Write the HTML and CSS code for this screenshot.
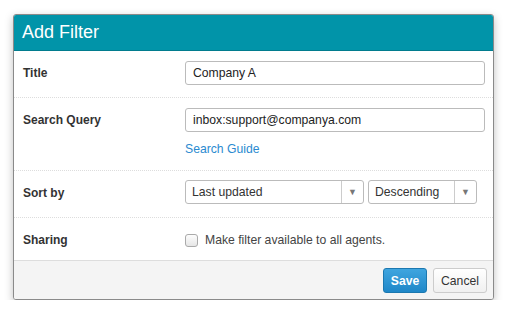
FILE: index.html
```html
<!DOCTYPE html>
<html>
<head lang="en">
    <meta charset="UTF-8">
    <title>Add Filter</title>
    <link rel="stylesheet" href="styles.css">
</head>
<body>
    <div class="modal">
        <div class="modal_head">Add Filter</div>
        <div class="row">
            <div class="label">Title</div>
            <div class="field">
                <input class="txt" type="text" value="Company A" />
            </div>
        </div>
        <div class="row">
            <div class="label">Search Query</div>
            <div class="field">
                <input class="txt" type="text" value="inbox:support@companya.com" />
                <a class="guide" href="#">Search Guide</a>
            </div>
        </div>
        <div class="row">
            <div class="label">Sort by</div>
            <div class="field sorts">
                <div class="sel sel_wide">
                    <span class="sel_val">Last updated</span>
                    <span class="sel_arrow">&#9660;</span>
                </div>
                <div class="sel sel_small">
                    <span class="sel_val">Descending</span>
                    <span class="sel_arrow">&#9660;</span>
                </div>
            </div>
        </div>
        <div class="row last">
            <div class="label">Sharing</div>
            <div class="field">
                <label class="share"><span class="box"></span>Make filter available to all agents.</label>
            </div>
        </div>
        <div class="modal_foot">
            <button class="btn btn_save">Save</button>
            <button class="btn btn_cancel">Cancel</button>
        </div>
    </div>
</body>
</html>
```
FILE: styles.css
```css
body {
    margin: 0;
    background: #fff;
    font-family: "Liberation Sans", Arial, sans-serif;
    font-size: 12.2px;
    color: #333;
}

.modal {
    width: 479px;
    margin: 14px 0 0 13px;
    border: 1px solid #8a8a8a;
    border-radius: 3px;
    box-shadow: 0 3px 8px rgba(0, 0, 0, 0.25);
    background: #fff;
}

.modal_head {
    height: 35px;
    line-height: 35px;
    padding-left: 8px;
    background: #0194a9;
    border-bottom: 1px solid #017c8e;
    color: #fff;
    font-size: 18px;
    border-radius: 2px 2px 0 0;
}

.row {
    display: flex;
    padding: 10px 8px 12px 9px;
    border-bottom: 1px dotted #ddd;
}

.row.last {
    padding-bottom: 8px;
    border-bottom: none;
}

.label {
    width: 162px;
    line-height: 24px;
    font-size: 12px;
    font-weight: bold;
    color: #333;
}

.field {
    flex: 1;
    display: flex;
    flex-direction: column;
}

.txt {
    box-sizing: border-box;
    width: 300px;
    height: 24px;
    padding: 0 7px;
    border: 1px solid #bbb;
    border-radius: 3px;
    font-family: "Liberation Sans", Arial, sans-serif;
    font-size: 12.2px;
    color: #222;
    outline: none;
}

.guide {
    margin-top: 8px;
    line-height: 18px;
    color: #2b8ad0;
    text-decoration: none;
}

.sorts {
    flex-direction: row;
    gap: 4px;
    padding-top: 0;
}

.sel {
    box-sizing: border-box;
    display: flex;
    height: 24px;
    margin-top: -1px;
    border: 1px solid #bbb;
    border-radius: 3px;
    background: #fff;
}

.sel_wide {
    width: 179px;
}

.sel_small {
    width: 109px;
}

.sel_val {
    flex: 1;
    padding-left: 6px;
    line-height: 22px;
}

.sel_arrow {
    width: 21px;
    border-left: 1px solid #ccc;
    text-align: center;
    line-height: 22px;
    font-size: 9px;
    color: #777;
}

.share {
    display: flex;
    align-items: center;
    height: 24px;
    color: #444;
}

.box {
    box-sizing: border-box;
    width: 13px;
    height: 13px;
    margin-right: 7px;
    border: 1px solid #aaa;
    border-radius: 3px;
    background: linear-gradient(#fdfdfd, #e6e6e6);
}

.modal_foot {
    display: flex;
    justify-content: flex-end;
    gap: 6px;
    padding: 7px 6px 6px 0;
    border-top: 1px solid #ddd;
    background: #f4f4f4;
    border-radius: 0 0 2px 2px;
}

.btn {
    height: 25px;
    padding: 0;
    border-radius: 3px;
    font-family: "Liberation Sans", Arial, sans-serif;
    font-size: 12.2px;
}

.btn_save {
    width: 44px;
    border: 1px solid #1b78b0;
    background: linear-gradient(#3fa5df, #1f87c8);
    color: #fff;
    font-weight: bold;
}

.btn_cancel {
    width: 54px;
    border: 1px solid #ccc;
    background: linear-gradient(#fff, #f0f0f0);
    color: #333;
}
```
